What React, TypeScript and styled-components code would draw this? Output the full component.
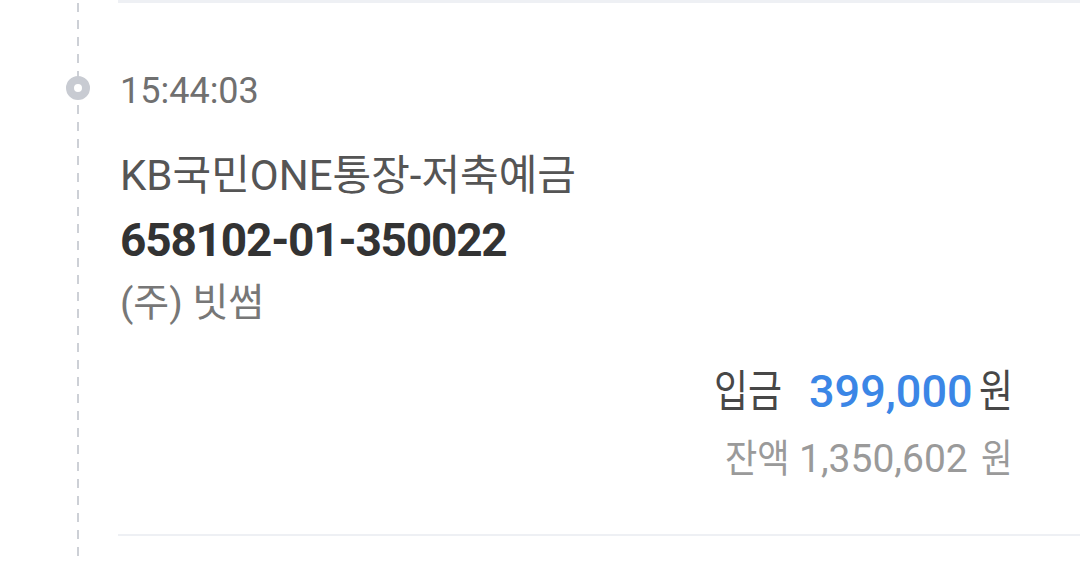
import React from 'react';
import styled, { createGlobalStyle } from 'styled-components';

const GlobalStyle = createGlobalStyle`
  html, body {
    margin: 0;
    padding: 0;
    background: #fff;
  }
  body {
    font-family: Roboto, "Noto Sans CJK KR", sans-serif;
    -webkit-font-smoothing: antialiased;
  }
`;

const Page = styled.div`
  display: grid;
  grid-template-columns: 118px 1fr;
  width: 1080px;
  height: 563px;
  overflow: hidden;
  background-image: linear-gradient(to bottom, #cdd0d6 9px, transparent 9px);
  background-size: 2px 17px;
  background-repeat: repeat-y;
  background-position: 77px 3px;
`;

const Rail = styled.div`
  padding: 76px 0 0 66px;
`;

const Dot = styled.div`
  width: 24px;
  height: 24px;
  box-sizing: border-box;
  border-radius: 50%;
  border: 8px solid #c8cbd2;
  background: #fff;
`;

const Entry = styled.div`
  display: flex;
  flex-direction: column;
  height: 536px;
  box-sizing: border-box;
  border-top: 3px solid #eef0f4;
  border-bottom: 2px solid #eef0f4;
  padding: 0 68px 0 2px;
`;

const Time = styled.div`
  margin-top: 68px;
  font-size: 36px;
  line-height: 40px;
  color: #707070;
`;

const AccountName = styled.div`
  margin-top: 40px;
  font-size: 42px;
  line-height: 50px;
  color: #555;
`;

const AccountNumber = styled.div`
  margin-top: 12px;
  font-size: 46px;
  line-height: 54px;
  font-weight: 700;
  letter-spacing: -1.2px;
  color: #333;
`;

const Holder = styled.div`
  margin-top: 11px;
  font-size: 39px;
  line-height: 50px;
  color: #777;
`;

const AmountRow = styled.div`
  margin-top: 38px;
  display: flex;
  justify-content: flex-end;
  align-items: baseline;
  font-size: 44px;
  line-height: 52px;
  color: #474747;
`;

const Amount = styled.span`
  margin: 0 6px 0 28px;
  font-size: 45px;
  font-weight: 500;
  color: #3b86e6;
`;

const BalanceRow = styled.div`
  margin-top: 18px;
  display: flex;
  justify-content: flex-end;
  align-items: baseline;
  font-size: 39px;
  line-height: 46px;
  color: #9a9a9a;
`;

const Balance = styled.span`
  margin: 0 13px 0 10px;
`;

const Hangul = styled.span<{ $scale: number; $chars: number }>`
  display: inline-block;
  transform: scaleX(${(p) => p.$scale});
  transform-origin: left center;
  margin-right: ${(p) => -(1 - p.$scale) * p.$chars}em;
`;

export default function App() {
  return (
    <>
      <GlobalStyle />
      <Page>
        <Rail>
          <Dot />
        </Rail>
        <Entry>
          <Time>15:44:03</Time>
          <AccountName>
            KB<Hangul $scale={1} $chars={2}>국민</Hangul>ONE
            <Hangul $scale={1} $chars={2}>통장</Hangul>-
            <Hangul $scale={1} $chars={4}>저축예금</Hangul>
          </AccountName>
          <AccountNumber>658102-01-350022</AccountNumber>
          <Holder>(주) 빗썸</Holder>
          <AmountRow>
            <Hangul $scale={0.84} $chars={2}>입금</Hangul>
            <Amount>399,000</Amount>
            <Hangul $scale={0.84} $chars={1}>원</Hangul>
          </AmountRow>
          <BalanceRow>
            <Hangul $scale={0.9} $chars={2}>잔액</Hangul>
            <Balance>1,350,602</Balance>
            <Hangul $scale={0.88} $chars={1}>원</Hangul>
          </BalanceRow>
        </Entry>
      </Page>
    </>
  );
}
